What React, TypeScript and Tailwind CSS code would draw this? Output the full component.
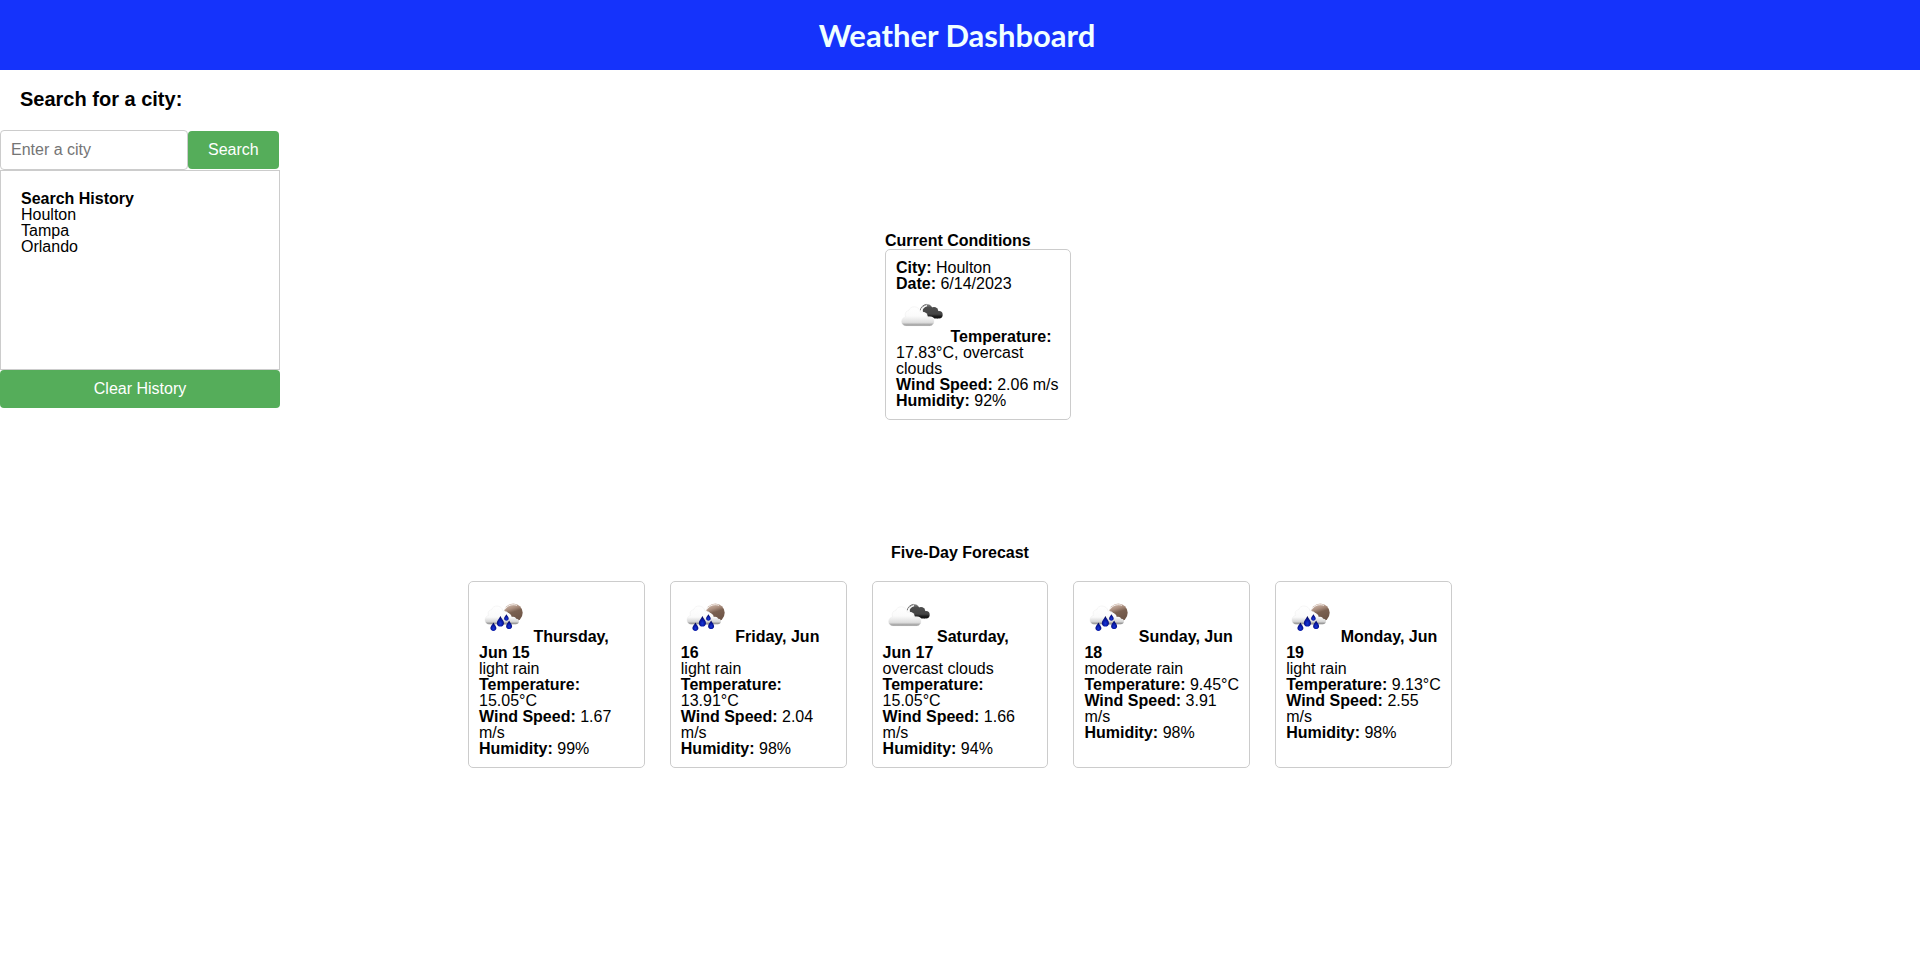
import React from "react";

function CloudsIcon() {
  return (
    <svg className="inline-block h-[50px] w-[50px] align-baseline" viewBox="0 0 50 50" role="img" aria-label="overcast clouds">
      <defs>
        <linearGradient id="cloud-white" x1="0" y1="14" x2="0" y2="34" gradientUnits="userSpaceOnUse">
          <stop offset="0" stopColor="#ffffff" />
          <stop offset="0.5" stopColor="#fbfbfb" />
          <stop offset="0.82" stopColor="#dedede" />
          <stop offset="0.92" stopColor="#b0b0b0" />
          <stop offset="1" stopColor="#6e6e6e" />
        </linearGradient>
        <linearGradient id="cloud-dark" x1="0" y1="12" x2="0" y2="26.5" gradientUnits="userSpaceOnUse">
          <stop offset="0" stopColor="#8a8a8a" />
          <stop offset="0.25" stopColor="#4c4c4c" />
          <stop offset="0.7" stopColor="#444444" />
          <stop offset="0.85" stopColor="#1c1c1c" />
          <stop offset="1" stopColor="#111111" />
        </linearGradient>
      </defs>
      <path d="M24.2 18.4C24.8 15.2 27 12.9 30.4 12.4" fill="none" stroke="#6a6a6a" strokeWidth="0.9" />
      <g fill="url(#cloud-dark)">
        <circle cx="31.4" cy="17.2" r="5" />
        <circle cx="38" cy="19.2" r="4.3" />
        <circle cx="43" cy="22.7" r="3.7" />
        <path d="M28 19H42V26.4H32Z" />
      </g>
      <path d="M25.6 19.6C26 16.8 28 14.3 31 13.6" fill="none" stroke="#ffffff" strokeWidth="1.1" />
      <g fill="#ffffff">
        <circle cx="27" cy="24.6" r="4.7" />
        <rect x="27" y="24.4" width="12" height="9" rx="5" />
      </g>
      <path
        d="M10 33.8C7.3 33.8 5.6 32.1 5.6 29.6C5.6 27 7.3 25.2 9.8 24.9C8.3 21.8 9.8 19 12.6 18.6C13.6 16 15.8 14.7 18.4 14.8C21.7 14.9 23.9 17 24.2 20.2C27.6 19.6 30.6 21.7 31 25.2C35.6 24.6 38 26.9 38 29.6C38 32.1 36.3 33.8 33.8 33.8Z"
        fill="url(#cloud-white)"
        stroke="#e2e2e2"
        strokeWidth="0.3"
      />
    </svg>
  );
}

function RainIcon({ label }: { label: string }) {
  return (
    <svg className="inline-block h-[50px] w-[50px] align-baseline" viewBox="0 0 50 50" role="img" aria-label={label}>
      <defs>
        <linearGradient id="rain-moon" x1="31" y1="11" x2="37" y2="30" gradientUnits="userSpaceOnUse">
          <stop offset="0" stopColor="#d8c2b4" />
          <stop offset="0.3" stopColor="#a88c7c" />
          <stop offset="0.48" stopColor="#7a6050" />
          <stop offset="1" stopColor="#6a5244" />
        </linearGradient>
        <linearGradient id="rain-cloud" x1="0" y1="14" x2="0" y2="32.5" gradientUnits="userSpaceOnUse">
          <stop offset="0" stopColor="#ffffff" />
          <stop offset="0.6" stopColor="#fafafa" />
          <stop offset="0.84" stopColor="#d6d6d6" />
          <stop offset="1" stopColor="#7c7c7c" />
        </linearGradient>
        <radialGradient id="rain-drop" cx="0.5" cy="0.7" r="0.6">
          <stop offset="0" stopColor="#1838d8" />
          <stop offset="0.5" stopColor="#0a1ba8" />
          <stop offset="1" stopColor="#050a60" />
        </radialGradient>
      </defs>
      <circle cx="34.3" cy="20.8" r="9.4" fill="url(#rain-moon)" />
      <path d="M26 17.4C28.2 13.4 33.6 11.6 38 13.4" fill="none" stroke="#ffffff" strokeWidth="0.8" />
      <path
        d="M10 32.3C7.6 32.3 6 30.5 6 28C6 25.6 7.6 23.8 9.6 23.4C8.4 20.4 10 17.9 12.6 17.7C13.4 15.3 15.6 14 18 14C21 14 23.4 16 24 19C27.5 18.7 30.2 21 30.6 24V32.3Z"
        fill="url(#rain-cloud)"
        stroke="#e2e2e2"
        strokeWidth="0.3"
      />
      <path
        d="M22 32.3V25.3C22.6 22.8 24.8 20.8 27.6 20.8C30.4 20.8 32.4 22.6 32.8 25C34.8 24.4 36.7 25.2 37.1 26.8C39 26.6 40 27.8 39.9 29.2C39.9 31 38.6 32.3 36.8 32.3Z"
        fill="url(#rain-cloud)"
      />
      <g fill="url(#rain-drop)">
        <path d="M14.4 30.4C15.7 32.8 17.4 34.4 17.4 36.1C17.4 37.8 16.1 39 14.4 39C12.7 39 11.4 37.8 11.4 36.1C11.4 34.4 13.1 32.8 14.4 30.4Z" />
        <path d="M21.4 24C23 27.2 25 29 25 31.2C25 33.2 23.4 34.6 21.4 34.6C19.4 34.6 17.8 33.2 17.8 31.2C17.8 29 19.8 27.2 21.4 24Z" />
        <path d="M27.4 22.2C28.4 24 29.7 25.2 29.7 26.6C29.7 27.9 28.7 28.8 27.4 28.8C26.1 28.8 25.1 27.9 25.1 26.6C25.1 25.2 26.4 24 27.4 22.2Z" />
        <path d="M30.1 28.5C31.4 30.9 33.1 32.4 33.1 34.2C33.1 35.9 31.8 37.1 30.1 37.1C28.4 37.1 27.1 35.9 27.1 34.2C27.1 32.4 28.8 30.9 30.1 28.5Z" />
      </g>
    </svg>
  );
}

type Day = { date: string; text: string; temp: string; wind: string; humidity: string };

const days: Day[] = [
  { date: "Thursday, Jun 15", text: "light rain", temp: "15.05°C", wind: "1.67 m/s", humidity: "99%" },
  { date: "Friday, Jun 16", text: "light rain", temp: "13.91°C", wind: "2.04 m/s", humidity: "98%" },
  { date: "Saturday, Jun 17", text: "overcast clouds", temp: "15.05°C", wind: "1.66 m/s", humidity: "94%" },
  { date: "Sunday, Jun 18", text: "moderate rain", temp: "9.45°C", wind: "3.91 m/s", humidity: "98%" },
  { date: "Monday, Jun 19", text: "light rain", temp: "9.13°C", wind: "2.55 m/s", humidity: "98%" },
];

const cities = ["Houlton", "Tampa", "Orlando"];

function DayCard({ day }: { day: Day }) {
  return (
    <li className="rounded-[5px] border border-[#cccccc] p-[10px]">
      {day.text.includes("clouds") ? <CloudsIcon /> : <RainIcon label={day.text} />} <strong>{day.date}</strong>
      <div>{day.text}</div>
      <div>
        <strong>Temperature:</strong> {day.temp}
      </div>
      <div>
        <strong>Wind Speed:</strong> {day.wind}
      </div>
      <div>
        <strong>Humidity:</strong> {day.humidity}
      </div>
    </li>
  );
}

export default function App() {
  return (
    <div className="min-h-screen bg-white font-['Liberation_Sans',Arial,sans-serif] text-base leading-4 text-black">
      <header className="flex h-[70px] items-center justify-center bg-[#1533fb] pr-1.5">
        <h1 className="font-['Trebuchet_MS',Lato,sans-serif] text-[31px] leading-8 font-bold text-[#f0ffff]">
          Weather Dashboard
        </h1>
      </header>
      <div className="grid grid-cols-[280px_1fr_280px]">
        <aside>
          <form onSubmit={(e) => e.preventDefault()}>
            <label htmlFor="city" className="block px-5 pt-[19px] pb-[21px] text-xl leading-5 font-bold">
              Search for a city:
            </label>
            <div className="flex items-center">
              <input
                id="city"
                type="text"
                placeholder="Enter a city"
                className="h-10 w-[188px] rounded border border-[#cccccc] px-[10px] placeholder:text-[#757575]"
              />
              <button type="submit" className="rounded bg-[#55ad5a] px-5 py-[11px] text-white">
                Search
              </button>
            </div>
          </form>
          <section className="h-[200px] border border-[#cccccc] p-5">
            <h2 className="font-bold">Search History</h2>
            <ul>
              {cities.map((city) => (
                <li key={city}>{city}</li>
              ))}
            </ul>
          </section>
          <button type="button" className="block w-full rounded bg-[#55ad5a] py-[11px] text-white">
            Clear History
          </button>
        </aside>
        <main className="flex flex-col items-center">
          <section className="mt-[163px] ml-9 w-[186px]">
            <h2 className="font-bold">Current Conditions</h2>
            <div className="rounded-[5px] border border-[#cccccc] p-[10px]">
              <div>
                <strong>City:</strong> Houlton
              </div>
              <div>
                <strong>Date:</strong> 6/14/2023
              </div>
              <div>
                <CloudsIcon /> <strong>Temperature:</strong> 17.83°C, overcast clouds
              </div>
              <div>
                <strong>Wind Speed:</strong> 2.06 m/s
              </div>
              <div>
                <strong>Humidity:</strong> 92%
              </div>
            </div>
          </section>
          <section className="mt-[125px] w-full max-w-[984px]">
            <h2 className="text-center font-bold">Five-Day Forecast</h2>
            <ul className="mt-5 grid grid-cols-5 gap-[25px]">
              {days.map((day) => (
                <DayCard key={day.date} day={day} />
              ))}
            </ul>
          </section>
        </main>
      </div>
    </div>
  );
}
